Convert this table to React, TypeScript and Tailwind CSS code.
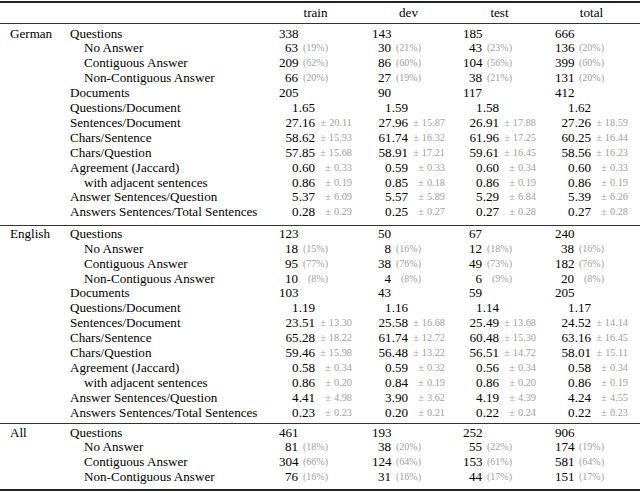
import React from "react";

type Kind = "int" | "pct" | "dec";
type Row = { label: string; indent?: boolean; kind: Kind; vals: [string, string?][] };

const german: Row[] = [
  { label: "Questions", kind: "int", vals: [["338"], ["143"], ["185"], ["666"]] },
  { label: "No Answer", indent: true, kind: "pct", vals: [["63", "(19%)"], ["30", "(21%)"], ["43", "(23%)"], ["136", "(20%)"]] },
  { label: "Contiguous Answer", indent: true, kind: "pct", vals: [["209", "(62%)"], ["86", "(60%)"], ["104", "(56%)"], ["399", "(60%)"]] },
  { label: "Non-Contiguous Answer", indent: true, kind: "pct", vals: [["66", "(20%)"], ["27", "(19%)"], ["38", "(21%)"], ["131", "(20%)"]] },
  { label: "Documents", kind: "int", vals: [["205"], ["90"], ["117"], ["412"]] },
  { label: "Questions/Document", kind: "dec", vals: [["1.65"], ["1.59"], ["1.58"], ["1.62"]] },
  { label: "Sentences/Document", kind: "dec", vals: [["27.16", "20.11"], ["27.96", "15.87"], ["26.91", "17.88"], ["27.26", "18.59"]] },
  { label: "Chars/Sentence", kind: "dec", vals: [["58.62", "15.93"], ["61.74", "16.32"], ["61.96", "17.25"], ["60.25", "16.44"]] },
  { label: "Chars/Question", kind: "dec", vals: [["57.85", "15.68"], ["58.91", "17.21"], ["59.61", "16.45"], ["58.56", "16.23"]] },
  { label: "Agreement (Jaccard)", kind: "dec", vals: [["0.60", "0.33"], ["0.59", "0.33"], ["0.60", "0.34"], ["0.60", "0.33"]] },
  { label: "with adjacent sentences", indent: true, kind: "dec", vals: [["0.86", "0.19"], ["0.85", "0.18"], ["0.86", "0.19"], ["0.86", "0.19"]] },
  { label: "Answer Sentences/Question", kind: "dec", vals: [["5.37", "6.09"], ["5.57", "5.89"], ["5.29", "6.84"], ["5.39", "6.26"]] },
  { label: "Answers Sentences/Total Sentences", kind: "dec", vals: [["0.28", "0.29"], ["0.25", "0.27"], ["0.27", "0.28"], ["0.27", "0.28"]] },
];

const english: Row[] = [
  { label: "Questions", kind: "int", vals: [["123"], ["50"], ["67"], ["240"]] },
  { label: "No Answer", indent: true, kind: "pct", vals: [["18", "(15%)"], ["8", "(16%)"], ["12", "(18%)"], ["38", "(16%)"]] },
  { label: "Contiguous Answer", indent: true, kind: "pct", vals: [["95", "(77%)"], ["38", "(76%)"], ["49", "(73%)"], ["182", "(76%)"]] },
  { label: "Non-Contiguous Answer", indent: true, kind: "pct", vals: [["10", "(8%)"], ["4", "(8%)"], ["6", "(9%)"], ["20", "(8%)"]] },
  { label: "Documents", kind: "int", vals: [["103"], ["43"], ["59"], ["205"]] },
  { label: "Questions/Document", kind: "dec", vals: [["1.19"], ["1.16"], ["1.14"], ["1.17"]] },
  { label: "Sentences/Document", kind: "dec", vals: [["23.51", "13.30"], ["25.58", "16.68"], ["25.49", "13.68"], ["24.52", "14.14"]] },
  { label: "Chars/Sentence", kind: "dec", vals: [["65.28", "18.22"], ["61.74", "12.72"], ["60.48", "15.30"], ["63.16", "16.45"]] },
  { label: "Chars/Question", kind: "dec", vals: [["59.46", "15.98"], ["56.48", "13.22"], ["56.51", "14.72"], ["58.01", "15.11"]] },
  { label: "Agreement (Jaccard)", kind: "dec", vals: [["0.58", "0.34"], ["0.59", "0.32"], ["0.56", "0.34"], ["0.58", "0.34"]] },
  { label: "with adjacent sentences", indent: true, kind: "dec", vals: [["0.86", "0.20"], ["0.84", "0.19"], ["0.86", "0.20"], ["0.86", "0.19"]] },
  { label: "Answer Sentences/Question", kind: "dec", vals: [["4.41", "4.98"], ["3.90", "3.62"], ["4.19", "4.39"], ["4.24", "4.55"]] },
  { label: "Answers Sentences/Total Sentences", kind: "dec", vals: [["0.23", "0.23"], ["0.20", "0.21"], ["0.22", "0.24"], ["0.22", "0.23"]] },
];

const all: Row[] = [
  { label: "Questions", kind: "int", vals: [["461"], ["193"], ["252"], ["906"]] },
  { label: "No Answer", indent: true, kind: "pct", vals: [["81", "(18%)"], ["38", "(20%)"], ["55", "(22%)"], ["174", "(19%)"]] },
  { label: "Contiguous Answer", indent: true, kind: "pct", vals: [["304", "(66%)"], ["124", "(64%)"], ["153", "(61%)"], ["581", "(64%)"]] },
  { label: "Non-Contiguous Answer", indent: true, kind: "pct", vals: [["76", "(16%)"], ["31", "(16%)"], ["44", "(17%)"], ["151", "(17%)"]] },
];

const GRID = "grid grid-cols-[70px_209px_93px_91px_92px_85px]";

function Cell({ kind, v }: { kind: Kind; v: [string, string?] }) {
  if (kind === "int") {
    return (
      <div className="flex">
        <span className="w-[19px] text-right whitespace-nowrap">{v[0]}</span>
      </div>
    );
  }
  if (kind === "pct") {
    return (
      <div className="flex">
        <span className="w-[19px] text-right whitespace-nowrap">{v[0]}</span>
        <span className="w-[30px] text-right whitespace-nowrap text-[10px] text-[#a0a0a0]">{v[1]}</span>
      </div>
    );
  }
  return (
    <div className="flex">
      <span className="w-[36px] text-right whitespace-nowrap">{v[0]}</span>
      {v[1] ? (
        <span className="w-[37px] text-right whitespace-nowrap text-[10.3px] text-[#a0a0a0]">
          ±<span className="ml-[3px]">{v[1]}</span>
        </span>
      ) : null}
    </div>
  );
}

function Section({ name, rows, pt, pb }: { name: string; rows: Row[]; pt: string; pb: string }) {
  return (
    <div className={`${pt} ${pb}`}>
      {rows.map((r, i) => (
        <div key={i} className={`${GRID} h-[14.92px] leading-[14.92px] items-center`}>
          <div className="pl-[10px] whitespace-nowrap">{i === 0 ? name : ""}</div>
          <div className={`whitespace-nowrap ${r.indent ? "pl-[14px]" : ""}`}>{r.label}</div>
          {r.vals.map((v, j) => (
            <Cell key={j} kind={r.kind} v={v} />
          ))}
        </div>
      ))}
    </div>
  );
}

export default function App() {
  return (
    <div
      className="w-[640px] h-[493px] bg-white text-black text-[13.1px] overflow-hidden pt-[1px]"
      style={{ fontFamily: '"Liberation Serif", "Times New Roman", serif' }}
    >
      <div className="h-[2px] bg-[#222]" />
      <div className={`${GRID} h-[20px] items-center`}>
        <div />
        <div />
        {["train", "dev", "test", "total"].map((h) => (
          <div key={h} className="w-[73px] text-center">
            {h}
          </div>
        ))}
      </div>
      <div className="h-[1px] bg-[#333]" />
      <Section name="German" rows={german} pt="pt-[2.5px]" pb="pb-[4.5px]" />
      <div className="h-[1px] bg-[#333]" />
      <Section name="English" rows={english} pt="pt-[1px]" pb="pb-[2.5px]" />
      <div className="h-[1px] bg-[#333]" />
      <Section name="All" rows={all} pt="pt-[1.5px]" pb="pb-[3.8px]" />
      <div className="h-[2px] bg-[#222]" />
    </div>
  );
}
